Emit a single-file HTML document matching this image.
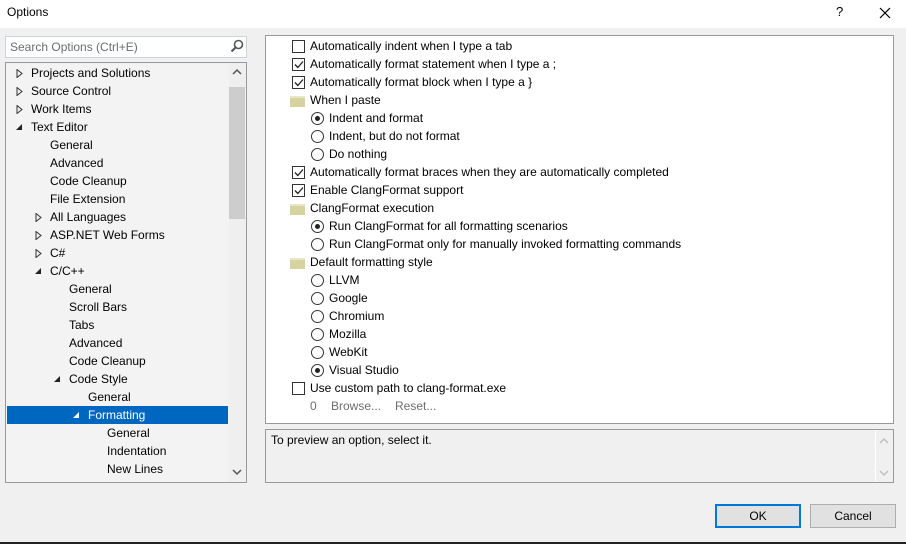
<!DOCTYPE html>
<html><head><meta charset="utf-8"><style>
*{margin:0;padding:0;box-sizing:border-box}
body{width:906px;height:544px;background:#f0f0f0;font-family:"Liberation Sans",sans-serif;font-size:12px;color:#000;position:relative;overflow:hidden}
.a{position:absolute;white-space:nowrap}
.t{position:absolute;line-height:18px;height:18px;white-space:nowrap}
.cb{position:absolute;width:13px;height:13px;border:1px solid #333;background:#fff}
.rb{position:absolute;width:13px;height:13px;border:1px solid #333;border-radius:50%;background:#fff}
.rb.on::after{content:"";position:absolute;left:3px;top:3px;width:5px;height:5px;border-radius:50%;background:#222}
.fd{position:absolute;width:15px;height:11px;background:#d7d3a0;border-top:2px solid #e8e6c8}
.tri{position:absolute;width:0;height:0}
</style></head><body>
<div class="a" style="left:0;top:0;width:906px;height:28px;background:#fff"></div>
<div class="a" style="left:7px;top:5px;font-size:12px">Options</div>
<div class="a" style="left:836px;top:4px;font-size:13px">?</div>
<svg class="a" style="left:879px;top:7px" width="12" height="12"><path d="M1 1L11 11M11 1L1 11" stroke="#000" stroke-width="1.2"/></svg>

<div class="a" style="left:5px;top:36px;width:242px;height:22px;background:#fff;border:1px solid #ccd3e0"></div>
<div class="a" style="left:10px;top:40px;color:#6d6d6d">Search Options (Ctrl+E)</div>
<svg class="a" style="left:230px;top:39px" width="14" height="14"><circle cx="8.5" cy="5.5" r="4" stroke="#555" stroke-width="1.6" fill="none"/><path d="M5.5 8.5L1.5 12.5" stroke="#555" stroke-width="2"/></svg>

<div class="a" style="left:5px;top:62px;width:242px;height:421px;background:#f3f3f3;border:1px solid #999"></div>
<div class="a" style="left:229px;top:63px;width:17px;height:419px;background:#efefef"></div>
<div class="a" style="left:229px;top:87px;width:16px;height:132px;background:#cdcdcd"></div>
<svg class="a" style="left:232px;top:68px" width="10" height="8"><path d="M1 6L5 2L9 6" stroke="#555" stroke-width="1.5" fill="none"/></svg>
<svg class="a" style="left:232px;top:468px" width="10" height="8"><path d="M1 2L5 6L9 2" stroke="#555" stroke-width="1.5" fill="none"/></svg>
<div class="a" style="left:7px;top:406px;width:221px;height:18px;background:#0067c0"></div>

<div id="tree"></div>

<div class="a" style="left:265px;top:35px;width:629px;height:389px;background:#fff;border:1px solid #999"></div>
<div class="a" style="left:265px;top:429px;width:629px;height:54px;background:#f0f0f0;border:1px solid #999"></div>
<div class="a" style="left:271px;top:433px">To preview an option, select it.</div>
<div class="a" style="left:875px;top:430px;width:18px;height:52px;background:#f0f0f0;border-left:1px solid #fff"></div>
<svg class="a" style="left:879px;top:437px" width="10" height="8"><path d="M1 6L5 2L9 6" stroke="#bbb" stroke-width="1.3" fill="none"/></svg>
<svg class="a" style="left:879px;top:469px" width="10" height="8"><path d="M1 2L5 6L9 2" stroke="#bbb" stroke-width="1.3" fill="none"/></svg>

<div id="opts"></div>

<div class="a" style="left:715px;top:504px;width:86px;height:24px;background:#e1e1e1;border:2px solid #0078d7;text-align:center;line-height:20px">OK</div>
<div class="a" style="left:810px;top:504px;width:86px;height:24px;background:#e1e1e1;border:1px solid #adadad;text-align:center;line-height:22px">Cancel</div>
<div class="a" style="left:0;top:542px;width:906px;height:2px;background:#222"></div>

<script>
var tree=[[0,'c','Projects and Solutions'],[0,'c','Source Control'],[0,'c','Work Items'],[0,'o','Text Editor'],[1,'','General'],[1,'','Advanced'],[1,'','Code Cleanup'],[1,'','File Extension'],[1,'c','All Languages'],[1,'c','ASP.NET Web Forms'],[1,'c','C#'],[1,'o','C/C++'],[2,'','General'],[2,'','Scroll Bars'],[2,'','Tabs'],[2,'','Advanced'],[2,'','Code Cleanup'],[2,'o','Code Style'],[3,'','General'],[3,'o','Formatting'],[4,'','General'],[4,'','Indentation'],[4,'','New Lines']];
var h='';
tree.forEach(function(r,i){var y=64+i*18,x=31+r[0]*19,sel=i==19,col=sel?'#fff':'#000';
if(r[1]=='c')h+='<svg class="a" style="left:'+(x-15)+'px;top:'+(y+5)+'px" width="7" height="9"><path d="M1 0.5L6 4.5L1 8.5Z" fill="none" stroke="#333"/></svg>';
if(r[1]=='o')h+='<svg class="a" style="left:'+(x-15)+'px;top:'+(y+6)+'px" width="7" height="7"><path d="M6 0L6 6L0 6Z" fill="'+(sel?'#fff':'#222')+'"/></svg>';
h+='<div class="t" style="left:'+x+'px;top:'+y+'px;color:'+col+'">'+r[2]+'</div>';});
document.getElementById('tree').innerHTML=h;
var o=[['c0','Automatically indent when I type a tab'],['c1','Automatically format statement when I type a ;'],['c1','Automatically format block when I type a }'],['f','When I paste'],['r1','Indent and format'],['r0','Indent, but do not format'],['r0','Do nothing'],['c1','Automatically format braces when they are automatically completed'],['c1','Enable ClangFormat support'],['f','ClangFormat execution'],['r1','Run ClangFormat for all formatting scenarios'],['r0','Run ClangFormat only for manually invoked formatting commands'],['f','Default formatting style'],['r0','LLVM'],['r0','Google'],['r0','Chromium'],['r0','Mozilla'],['r0','WebKit'],['r1','Visual Studio'],['c0','Use custom path to clang-format.exe']];
h='';
o.forEach(function(r,i){var y=37+i*18,k=r[0];
if(k[0]=='c'){h+='<div class="cb" style="left:292px;top:'+(y+3)+'px"></div>';if(k[1]=='1')h+='<svg class="a" style="left:294px;top:'+(y+5)+'px" width="10" height="9"><path d="M1 4.5L3.8 7.5L9 1.5" stroke="#222" stroke-width="1.3" fill="none"/></svg>';h+='<div class="t" style="left:310px;top:'+y+'px">'+r[1]+'</div>';}
else if(k=='f'){h+='<div class="fd" style="left:290px;top:'+(y+5)+'px"></div><div class="t" style="left:310px;top:'+y+'px">'+r[1]+'</div>';}
else{h+='<div class="rb'+(k[1]=='1'?' on':'')+'" style="left:311px;top:'+(y+3)+'px"></div><div class="t" style="left:329px;top:'+y+'px">'+r[1]+'</div>';}});
h+='<div class="t" style="left:310px;top:397px;color:#6d6d6d">0</div><div class="t" style="left:331px;top:397px;color:#6d6d6d">Browse...</div><div class="t" style="left:395px;top:397px;color:#6d6d6d">Reset...</div>';
document.getElementById('opts').innerHTML=h;
</script>
</body></html>
